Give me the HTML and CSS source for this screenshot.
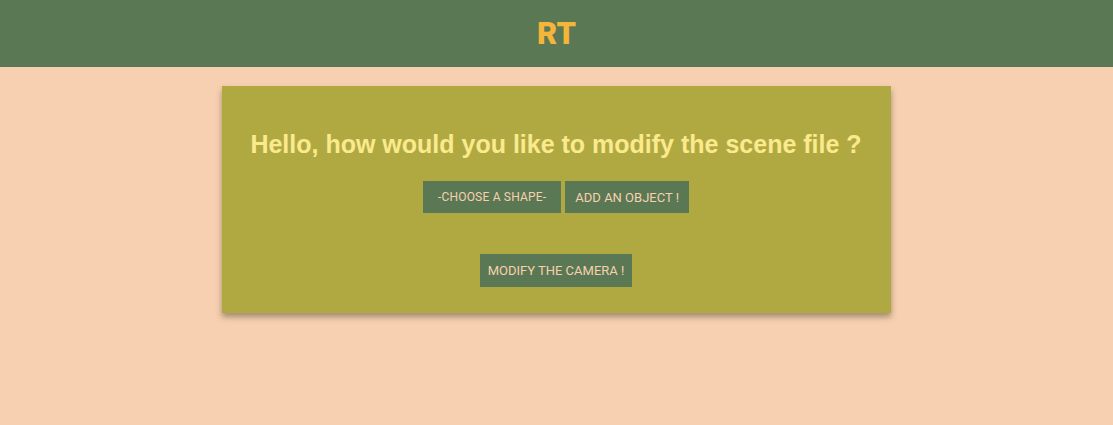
FILE: index.html
```html
<!DOCTYPE html>
<html>
<head>
<meta charset="utf-8">
<link rel="stylesheet" href="styles.css">
</head>
<body>
<header class="topbar"><span class="logo">RT</span></header>
<main class="page">
  <section class="card">
    <h2 class="title">Hello, how would you like to modify the scene file ?</h2>
    <div class="row">
      <button class="btn btn-shape">-Choose a shape-</button>
      <button class="btn">Add an object !</button>
    </div>
    <div class="row row-camera">
      <button class="btn">Modify the camera !</button>
    </div>
  </section>
</main>
</body>
</html>
```
FILE: styles.css
```css
html, body { margin: 0; padding: 0; }
body {
  background: #f7d0b1;
  font-family: "Liberation Sans", Arial, sans-serif;
  width: 1113px;
  height: 425px;
  overflow: hidden;
}
.topbar {
  height: 67px;
  background: #5a7853;
  display: flex;
  align-items: center;
  justify-content: center;
}
.logo {
  font-family: Roboto, "Noto Sans", sans-serif;
  font-weight: 900;
  font-size: 31px;
  color: #f4b53a;
}
.page {
  display: flex;
  justify-content: center;
  padding-top: 19px;
  padding-right: 1px;
}
.card {
  width: 669px;
  height: 227px;
  box-sizing: border-box;
  background: #b0a942;
  box-shadow: 0 4px 6px rgba(60, 60, 30, 0.45);
  display: flex;
  flex-direction: column;
  align-items: center;
  padding-top: 44px;
}
.title {
  margin: 0;
  font-size: 25px;
  font-weight: bold;
  color: #fbe98e;
  line-height: 28px;
}
.row {
  display: flex;
  gap: 4px;
  margin-top: 23px;
}
.row-camera { margin-top: 41px; }
.btn {
  font-family: Roboto, "Noto Sans", sans-serif;
  font-size: 13px;
  text-transform: uppercase;
  background: #5a7853;
  color: #f7d0b1;
  border: none;
  height: 32px;
  padding: 0 10px;
  margin: 0;
  cursor: pointer;
}
.btn-shape { padding: 0 15px; font-size: 12px; letter-spacing: 0.2px; }
.row-camera .btn { height: 33px; padding: 0 8px; }
```
